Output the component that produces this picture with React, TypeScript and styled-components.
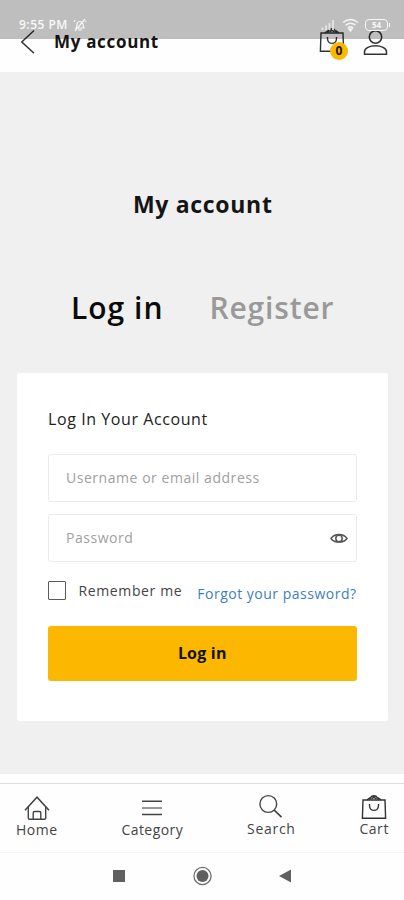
import React from 'react';
import styled, { createGlobalStyle } from 'styled-components';

const GlobalStyle = createGlobalStyle`
  * { box-sizing: border-box; }
  body { margin: 0; background: #fff; font-family: "Open Sans", "Noto Sans", sans-serif; color: #151515; }
  button, input { font-family: inherit; }
  svg { display: block; flex: none; }
`;

const Screen = styled.div`
  position: relative;
  display: flex;
  flex-direction: column;
  width: 404px;
  height: 900px;
  overflow: hidden;
  background: #fefefe;
`;

/* Translucent system bar laid over the app header */
const StatusBar = styled.div`
  position: absolute;
  inset: 0 0 auto 0;
  height: 38.5px;
  padding: 10px 16px 0 19px;
  display: flex;
  justify-content: space-between;
  background: rgba(0, 0, 0, 0.25);
  color: #f8f8f8;
`;

const StatusGroup = styled.div<{ $gap: number }>`
  display: flex;
  align-items: center;
  height: 30px;
  gap: ${(p) => p.$gap}px;
`;

const Clock = styled.span`
  font-size: 12px;
  font-weight: 600;
  line-height: 16px;
  letter-spacing: 0.5px;
  white-space: nowrap;
`;

const Header = styled.header`
  flex: none;
  display: flex;
  align-items: flex-start;
  height: 72px;
  padding: 27px 16px 0 20px;
`;

const BackButton = styled.button`
  width: 34px;
  padding: 1px 0 0;
  border: 0;
  background: none;
`;

const HeaderTitle = styled.h1`
  flex: 1;
  margin: 2px 0 0;
  font-size: 17px;
  font-weight: 700;
  line-height: 25px;
  letter-spacing: 0.68px;
`;

const HeaderActions = styled.div`
  display: flex;
  gap: 18px;
`;

const CartButton = styled.div`
  position: relative;
`;

const Badge = styled.span`
  position: absolute;
  left: 11px;
  top: 14.5px;
  width: 18px;
  height: 18px;
  border-radius: 50%;
  background: #fcb800;
  font-size: 12px;
  font-weight: 700;
  line-height: 18px;
  text-align: center;
`;

const Main = styled.main`
  flex: none;
  height: 702px;
  padding: 0 16.5px 0 17px;
  background: #f0f0f0;
`;

const PageTitle = styled.h2`
  margin: 0;
  padding: 116px 0 0 1px;
  font-size: 23px;
  font-weight: 700;
  line-height: 32px;
  letter-spacing: 0.7px;
  text-align: center;
`;

const Tabs = styled.div`
  display: flex;
  gap: 46px;
  height: 40px;
  margin-top: 68px;
  padding-left: 54px;
`;

const Tab = styled.a<{ $active?: boolean }>`
  font-size: 30px;
  font-weight: 600;
  line-height: 40px;
  letter-spacing: ${(p) => (p.$active ? 1 : 0.85)}px;
  white-space: nowrap;
  color: ${(p) => (p.$active ? '#0b0b0b' : '#999')};
`;

const Card = styled.form`
  height: 348px;
  margin-top: 44.5px;
  padding: 33px 31px 0;
  border-radius: 2px;
  background: #fff;
`;

const CardTitle = styled.h3`
  height: 24px;
  margin: 0 0 24px;
  font-size: 16px;
  font-weight: 400;
  line-height: 26px;
  letter-spacing: 0.58px;
  color: #222;
`;

const Fields = styled.div`
  display: grid;
  gap: 12px;
`;

const Field = styled.label`
  display: flex;
  align-items: center;
  height: 48px;
  padding: 0 8px 0 17px;
  border: 1.5px solid #ebebeb;
  border-radius: 3px;
`;

const Input = styled.input`
  flex: 1;
  min-width: 0;
  padding: 0;
  border: 0;
  outline: 0;
  background: none;
  font-size: 14px;
  letter-spacing: 0.54px;
  &::placeholder { color: #a0a0a0; }
`;

const Options = styled.div`
  display: flex;
  align-items: flex-start;
  height: 45px;
  margin-top: 19px;
`;

const Checkbox = styled.span`
  width: 18px;
  height: 19px;
  border: 1.3px solid #5c5c5c;
  border-radius: 1px;
`;

const Remember = styled.span`
  flex: 1;
  padding-left: 12.5px;
  font-size: 14px;
  line-height: 20px;
  letter-spacing: 0.62px;
  white-space: nowrap;
  color: #444;
`;

const Forgot = styled.a`
  margin-top: 3px;
  font-size: 14px;
  line-height: 20px;
  letter-spacing: 0.5px;
  white-space: nowrap;
  color: #3c7fbd;
`;

const Submit = styled.button`
  display: block;
  width: 100%;
  height: 55px;
  padding: 0;
  border: 0;
  border-radius: 3px;
  background: #fcb800;
  color: #151208;
  font-size: 16px;
  font-weight: 700;
  letter-spacing: 0.2px;
`;

const TabBar = styled.nav`
  flex: none;
  display: flex;
  justify-content: space-between;
  height: 70px;
  margin-top: 9px;
  padding: 0 15px 0 16px;
  border-top: 1.5px solid #dedede;
  border-bottom: 1px solid #f5f5f5;
`;

const TabItem = styled.a<{ $lift?: boolean }>`
  display: flex;
  flex-direction: column;
  align-items: center;
  padding-top: ${(p) => (p.$lift ? 10 : 11)}px;
`;

const TabLabel = styled.span<{ $spacing: number }>`
  margin-top: -1px;
  font-size: 14px;
  line-height: 20px;
  letter-spacing: ${(p) => p.$spacing}px;
  color: #444;
`;

const SystemNav = styled.div`
  flex: 1;
  display: flex;
  align-items: center;
  padding: 0 0 1px 112px;
`;

const Bag = () => (
  <svg width="26" height="26" viewBox="0 0 26 26" fill="none" stroke="#333" strokeWidth="1.4">
    <path d="M2 6H24L24.6 24.200H1.400Z" />
    <path d="M6 5.700C7.500 5.300 8 3.700 9.500 3.700 11 1.100 15 1.100 16.300 3.700 18 3.700 18.500 5.300 20 5.700M9.500 3.700 8.700 5.800M16.300 3.700 17.500 5.800M10.500 5.100l2.300-2 2.700 2" />
    <path d="M8.500 10v1.500c0 6.500 9 6.500 9 0V10" />
  </svg>
);

const HomeIcon = () => (
  <svg width="26" height="26" viewBox="0 0 26 26" fill="none" stroke="#444" strokeWidth="1.4">
    <path d="M1 15.2 13 2.2 25 15.2" strokeWidth="1.6" />
    <path d="M4.300 12v11q0 1.200 1.200 1.200h15q1.200 0 1.200-1.200V12M9.200 24v-6.200q0-1.300 1.300-1.300h5q1.300 0 1.300 1.300V24" />
  </svg>
);

const MenuIcon = () => (
  <svg width="26" height="26" viewBox="0 0 26 26" fill="none" strokeWidth="1.5">
    <path d="M3 6.300H23M3 19.400H23" stroke="#444" />
    <path d="M3 13H23" stroke="#999" strokeWidth="2" />
  </svg>
);

const SearchIcon = () => (
  <svg width="26" height="26" viewBox="0 0 26 26" fill="none" stroke="#444" strokeWidth="1.4">
    <circle cx="10.300" cy="10" r="8.400" />
    <path d="m16.200 16.200 7.300 7" strokeWidth="1.700" />
  </svg>
);

const EyeIcon = () => (
  <svg width="18" height="12" viewBox="0 0 18 12" fill="none" stroke="#555" strokeWidth="1.5">
    <path d="M1 6.500C4.500 1.100 13.500 1.100 17 6.500 13.500 11.300 4.500 11.300 1 6.500Z" />
    <circle cx="9" cy="6.500" r="3.200" />
  </svg>
);

const MutedIcon = () => (
  <svg width="14" height="14" viewBox="0 0 14 14" fill="none" stroke="#f5f5f5" strokeWidth="1.2">
    <path d="M3 10c1-1 .8-2 .9-3.500.4-4 5.600-4 6.200 0 .1 1.500 0 2.500.9 3.500ZM5.500 11.500q1.500 1.300 3 0M2 13 12 1M1 4l1.200-2M13 4l-.8-1.300" />
  </svg>
);

const SignalIcon = () => (
  <svg width="15" height="12" viewBox="0 0 15 12" stroke="#e4e4e4" strokeWidth="1.800">
    <path d="M1.500 11V8.500M5 11V6.500M8.500 11V4M12 11V1" />
  </svg>
);

const WifiIcon = () => (
  <svg width="17" height="14" viewBox="0 0 17 14" fill="none" stroke="#f5f5f5" strokeWidth="1.400">
    <path d="M1 4.500q7.500-6 15 0M3.500 7.200q5-4 10 0M5.800 9.700q2.700-2 5.400 0" />
    <path d="m7 11 1.500 2L10 11Z" fill="#f5f5f5" />
  </svg>
);

const BatteryShell = styled.span`
  position: relative;
  width: 23px;
  height: 12px;
  border: 1.3px solid #f5f5f5;
  border-radius: 4px;
  font-size: 8px;
  font-weight: 700;
  line-height: 10px;
  text-align: center;
  &::after {
    content: '';
    position: absolute;
    right: -3px;
    top: 3px;
    width: 1.5px;
    height: 4px;
    background: #f5f5f5;
  }
`;

export default function App() {
  return (
    <Screen>
      <GlobalStyle />
      <Header>
        <BackButton aria-label="Back">
          <svg width="16" height="26" viewBox="0 0 16 26" fill="none" stroke="#333" strokeWidth="1.5">
            <path d="M14 2.500 1.800 14 14 25.200" />
          </svg>
        </BackButton>
        <HeaderTitle>My account</HeaderTitle>
        <HeaderActions>
          <CartButton>
            <Bag />
            <Badge>0</Badge>
          </CartButton>
          <svg width="25" height="29" viewBox="0 0 25 29" fill="none" stroke="#333" strokeWidth="1.500">
            <circle cx="12.500" cy="10" r="6.200" />
            <path d="M1.500 27.200v-2.400c0-8 22-8 22 0v2.400Z" />
          </svg>
        </HeaderActions>
      </Header>

      <Main>
        <PageTitle>My account</PageTitle>
        <Tabs>
          <Tab $active>Log in</Tab>
          <Tab>Register</Tab>
        </Tabs>
        <Card>
          <CardTitle>Log In Your Account</CardTitle>
          <Fields>
            <Field>
              <Input placeholder="Username or email address" />
            </Field>
            <Field>
              <Input type="password" placeholder="Password" />
              <EyeIcon />
            </Field>
          </Fields>
          <Options>
            <Checkbox role="checkbox" aria-checked={false} />
            <Remember>Remember me</Remember>
            <Forgot>Forgot your password?</Forgot>
          </Options>
          <Submit type="button">Log in</Submit>
        </Card>
      </Main>

      <TabBar>
        <TabItem>
          <HomeIcon />
          <TabLabel $spacing={0.5}>Home</TabLabel>
        </TabItem>
        <TabItem>
          <MenuIcon />
          <TabLabel $spacing={0.45}>Category</TabLabel>
        </TabItem>
        <TabItem $lift>
          <SearchIcon />
          <TabLabel $spacing={0.7}>Search</TabLabel>
        </TabItem>
        <TabItem $lift>
          <Bag />
          <TabLabel $spacing={0.56}>Cart</TabLabel>
        </TabItem>
      </TabBar>

      <SystemNav>
        <svg width="182" height="22" viewBox="0 0 182 22" fill="#606060">
          <rect x="1" y="5" width="12" height="12" />
          <circle cx="90.500" cy="11" r="6" />
          <circle cx="90.500" cy="11" r="8.600" fill="none" stroke="#707070" strokeWidth="1.300" />
          <path d="M167 11 179 4.500v13Z" />
        </svg>
      </SystemNav>

      <StatusBar>
        <StatusGroup $gap={5}>
          <Clock>9:55 PM</Clock>
          <MutedIcon />
        </StatusGroup>
        <StatusGroup $gap={6}>
          <SignalIcon />
          <WifiIcon />
          <BatteryShell>54</BatteryShell>
        </StatusGroup>
      </StatusBar>
    </Screen>
  );
}
